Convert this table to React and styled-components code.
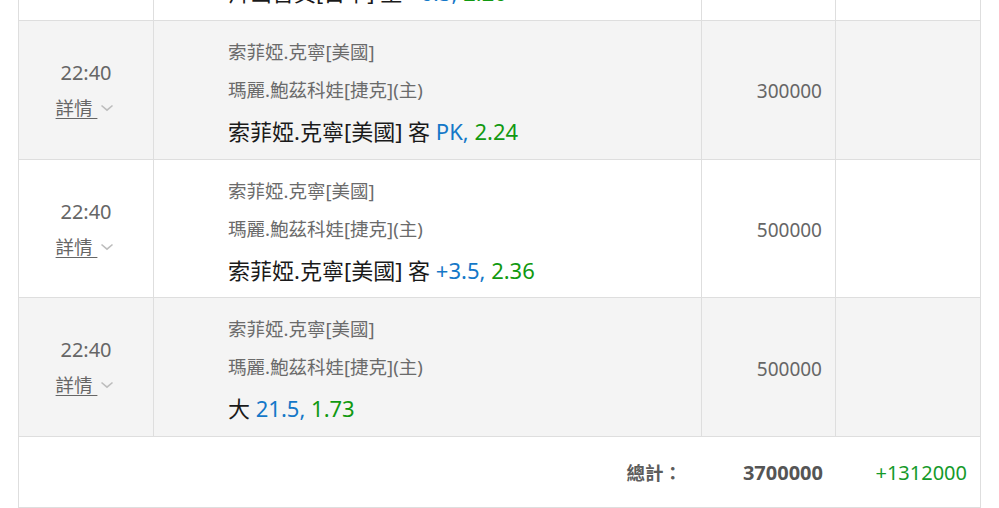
import styled, { createGlobalStyle } from 'styled-components'

const GlobalStyle = createGlobalStyle`
  html, body {
    margin: 0;
    padding: 0;
    background: #fff;
    overflow: hidden;
  }
  body {
    font-family: "Noto Sans", "Noto Sans CJK TC", sans-serif;
  }
`

const bets = [
  { home: '松山英樹[日本]', away: '片山晋呉[日本](主)', pick: '片山晋呉[日本] 主', line: '+0.5', odds: '2.20', amount: '300000', shade: false },
  { home: '索菲婭.克寧[美國]', away: '瑪麗.鮑茲科娃[捷克](主)', pick: '索菲婭.克寧[美國] 客', line: 'PK', odds: '2.24', amount: '300000', shade: true },
  { home: '索菲婭.克寧[美國]', away: '瑪麗.鮑茲科娃[捷克](主)', pick: '索菲婭.克寧[美國] 客', line: '+3.5', odds: '2.36', amount: '500000', shade: false },
  { home: '索菲婭.克寧[美國]', away: '瑪麗.鮑茲科娃[捷克](主)', pick: '大', line: '21.5', odds: '1.73', amount: '500000', shade: true },
]

const Chevron = () => (
  <svg width="14" height="8" viewBox="0 0 14 8">
    <polyline points="1.5,1.5 7,6.2 12.5,1.5" fill="none" stroke="#bdbdbd" strokeWidth="1.6" />
  </svg>
)

const App = () => {
  return (
    <>
      <GlobalStyle />
      <Table>
        {bets.map((b, i) => (
          <Row key={i} shade={b.shade}>
            <TimeCell>
              <Time>22:40</Time>
              <Detail>
                <DetailLink>詳情 </DetailLink>
                <Chevron />
              </Detail>
            </TimeCell>
            <InfoCell>
              <Team>{b.home}</Team>
              <Team>{b.away}</Team>
              <Pick>
                {b.pick} <Line>{b.line},</Line> <Odds>{b.odds}</Odds>
              </Pick>
            </InfoCell>
            <AmountCell>{b.amount}</AmountCell>
            <ResultCell />
          </Row>
        ))}
        <Footer>
          <TotalLabel>總計：</TotalLabel>
          <TotalAmount>3700000</TotalAmount>
          <TotalWin>+1312000</TotalWin>
        </Footer>
      </Table>
    </>
  )
}

const Table = styled.div`
  margin: -117.7px 0 0 18px;
  width: 963px;
  box-sizing: border-box;
  border-left: 1px solid #dedede;
  border-right: 1px solid #dedede;
  border-bottom: 1px solid #dedede;
`
const Row = styled.div`
  display: grid;
  grid-template-columns: 135px 548px 134px 1fr;
  height: 138.7px;
  box-sizing: border-box;
  border-bottom: 1px solid #dedede;
  background-color: ${(props) => props.shade ? '#f4f4f4' : '#fff'};
`
const Cell = styled.div`
  box-sizing: border-box;
  border-right: 1px solid #dedede;
`
const TimeCell = styled(Cell)`
  display: flex;
  flex-direction: column;
  align-items: center;
  justify-content: center;
`
const Time = styled.div`
  font-size: 20px;
  color: #666;
  line-height: 28px;
`
const Detail = styled.div`
  display: flex;
  align-items: center;
  gap: 3px;
  margin-top: 8px;
  margin-right: 2px;
`
const DetailLink = styled.span`
  font-size: 18.5px;
  color: #666;
  text-decoration: underline;
  text-underline-offset: 3px;
  white-space: pre;
  line-height: 26px;
`
const InfoCell = styled(Cell)`
  padding: 12px 0 0 74px;
`
const Team = styled.div`
  font-size: 18.5px;
  color: #6b6b6b;
  line-height: 38px;
  white-space: nowrap;
`
const Pick = styled.div`
  font-size: 22px;
  color: #1a1a1a;
  line-height: 44px;
  white-space: nowrap;
`
const Line = styled.span`
  color: #1478c8;
`
const Odds = styled.span`
  color: #119911;
`
const AmountCell = styled(Cell)`
  display: flex;
  align-items: center;
  justify-content: flex-end;
  padding: 3px 13px 0 0;
  font-size: 19px;
  color: #666;
`
const ResultCell = styled.div``
const Footer = styled.div`
  display: grid;
  grid-template-columns: 135px 548px 134px 1fr;
  height: 70px;
  align-items: center;
  font-size: 20px;
`
const TotalLabel = styled.div`
  grid-column: 2;
  justify-self: end;
  padding-right: 20px;
  font-size: 18.5px;
  font-weight: bold;
  color: #5c5c5c;
`
const TotalAmount = styled.div`
  justify-self: end;
  padding-right: 13px;
  font-weight: bold;
  color: #555;
`
const TotalWin = styled.div`
  justify-self: end;
  padding-right: 13px;
  color: #159a2a;
`

export default App
